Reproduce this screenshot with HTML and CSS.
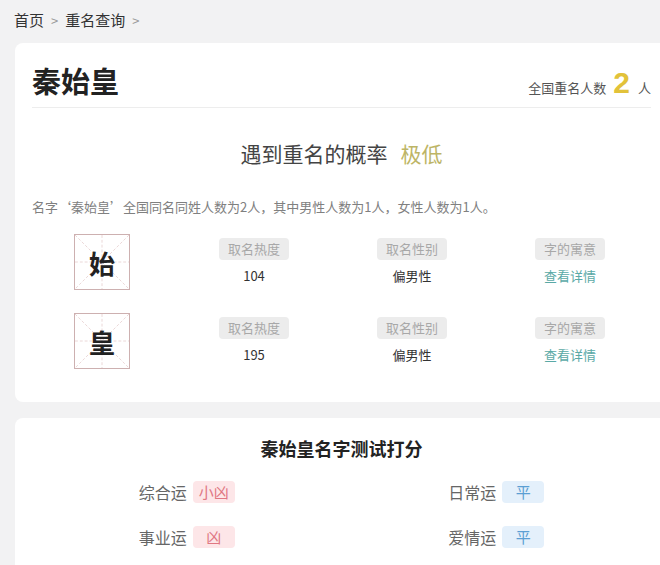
FILE: index.html
```html
<!DOCTYPE html>
<html lang="zh-CN">
<head>
  <meta charset="UTF-8">
  <meta name="viewport" content="width=device-width, initial-scale=1.0">
  <title>秦始皇 - 重名查询</title>
  <link rel="stylesheet" href="styles.css">
</head>
<body>
  <div class="crumbs">
    <a href="#">首页</a><span class="sep">&gt;</span><a href="#">重名查询</a><span class="sep">&gt;</span>
  </div>

  <div class="card name-card">
    <div class="name-head">
      <h1>秦始皇</h1>
      <div class="same-count">全国重名人数<b>2</b>人</div>
    </div>
    <p class="chance">遇到重名的概率<span>极低</span></p>
    <p class="summary">名字‘秦始皇’全国同名同姓人数为2人，其中男性人数为1人，女性人数为1人。</p>

    <div class="char-row">
      <div class="char-box">
        <svg viewBox="0 0 56 56"><path d="M0 0L56 56M56 0L0 56M28 0V56M0 28H56"/></svg>
        <span>始</span>
      </div>
      <div class="info"><span class="tag">取名热度</span><span class="val">104</span></div>
      <div class="info"><span class="tag">取名性别</span><span class="val">偏男性</span></div>
      <div class="info"><span class="tag">字的寓意</span><a class="val link" href="#">查看详情</a></div>
    </div>
    <div class="char-row">
      <div class="char-box">
        <svg viewBox="0 0 56 56"><path d="M0 0L56 56M56 0L0 56M28 0V56M0 28H56"/></svg>
        <span>皇</span>
      </div>
      <div class="info"><span class="tag">取名热度</span><span class="val">195</span></div>
      <div class="info"><span class="tag">取名性别</span><span class="val">偏男性</span></div>
      <div class="info"><span class="tag">字的寓意</span><a class="val link" href="#">查看详情</a></div>
    </div>
  </div>

  <div class="card score-card">
    <h2>秦始皇名字测试打分</h2>
    <div class="luck-grid">
      <div class="luck">综合运<span class="bad">小凶</span></div>
      <div class="luck">日常运<span class="mid">平</span></div>
      <div class="luck">事业运<span class="bad">凶</span></div>
      <div class="luck">爱情运<span class="mid">平</span></div>
    </div>
  </div>
</body>
</html>
```

FILE: styles.css
```css
body {
  font-family: "Noto Sans CJK SC", "Noto Sans", sans-serif;
  background: #f2f2f3;
  margin: 0;
  padding: 9px 0 0 0;
  overflow: hidden;
  color: #333;
}
a { text-decoration: none; color: inherit; }

.crumbs {
  margin-left: 14px;
  font-size: 15px;
  line-height: 22px;
  color: #333;
}
.crumbs .sep {
  color: #999;
  margin: 0 7px;
  font-size: 13px;
}

.card {
  background: #fff;
  border-radius: 8px;
  margin: 11px 0 0 15px;
  width: 619px;
  padding: 0 17px;
}
.name-card { padding-bottom: 33px; }

.name-head {
  display: flex;
  justify-content: space-between;
  align-items: baseline;
  padding-top: 17px;
  padding-bottom: 7px;
  border-bottom: 1px solid #ededed;
}
.name-head h1 {
  margin: 0;
  font-size: 29px;
  line-height: 40px;
  font-weight: bold;
  color: #222;
}
.same-count {
  font-size: 13px;
  color: #555;
}
.same-count b {
  font-family: "Liberation Sans", Arial, sans-serif;
  font-size: 30px;
  color: #e2c23a;
  margin: 0 8px 0 7px;
}

.chance {
  margin: 30px 0 0;
  text-align: center;
  font-size: 21px;
  line-height: 30px;
  color: #444;
}
.chance span {
  color: #bdb566;
  margin-left: 13px;
}

.summary {
  margin: 29px 0 0;
  font-size: 13px;
  line-height: 20px;
  color: #808080;
}

.char-row {
  display: grid;
  grid-template-columns: 140px 164px 152px 164px;
  align-items: center;
  margin-top: 17px;
}
.char-row + .char-row { margin-top: 23px; }

.char-box {
  position: relative;
  width: 56px;
  height: 56px;
  box-sizing: border-box;
  border: 1px solid #cdb0b0;
  justify-self: center;
  display: flex;
  align-items: center;
  justify-content: center;
}
.char-box svg {
  position: absolute;
  left: 0;
  top: 0;
  width: 100%;
  height: 100%;
}
.char-box svg path {
  stroke: #ead6d6;
  stroke-width: 1;
  stroke-dasharray: 3 2;
  fill: none;
}
.char-box span {
  position: relative;
  font-size: 26px;
  font-weight: bold;
  color: #222;
}

.info {
  display: flex;
  flex-direction: column;
  align-items: center;
}
.tag {
  background: #ececec;
  color: #a8a8a8;
  font-size: 13px;
  line-height: 22px;
  padding: 0 9px;
  border-radius: 4px;
}
.val {
  margin-top: 6px;
  font-size: 13px;
  line-height: 20px;
  color: #333;
}
.val.link { color: #5aa9a6; }

.score-card {
  margin-top: 16px;
  padding-top: 17px;
  padding-bottom: 40px;
}
.score-card h2 {
  margin: 0;
  text-align: center;
  font-size: 18px;
  line-height: 26px;
  font-weight: bold;
  color: #222;
}
.luck-grid {
  display: grid;
  grid-template-columns: 1fr 1fr;
  row-gap: 23px;
  margin-top: 20px;
}
.luck {
  justify-self: center;
  display: flex;
  align-items: center;
  font-size: 16px;
  line-height: 22px;
  color: #666;
}
.luck span {
  margin-left: 6px;
  min-width: 38px;
  text-align: center;
  font-size: 15px;
  line-height: 22px;
  padding: 0 2px;
  border-radius: 4px;
}
.luck .bad {
  background: #fde6e8;
  color: #e07782;
}
.luck .mid {
  background: #e4f0fb;
  color: #5b9fd3;
}
```
